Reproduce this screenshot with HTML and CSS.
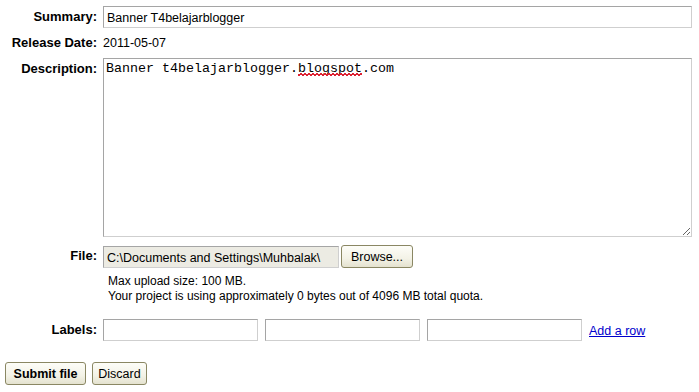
FILE: index.html
```html
<!DOCTYPE html>
<html>
<head>
<meta charset="utf-8">
<link rel="stylesheet" href="styles.css">
</head>
<body>
<form class="form">
  <div class="row">
    <label class="lbl">Summary:</label>
    <div class="field"><input class="text summary" type="text" value="Banner T4belajarblogger"></div>
  </div>
  <div class="row row-date">
    <label class="lbl">Release Date:</label>
    <div class="field value">2011-05-07</div>
  </div>
  <div class="row row-desc">
    <label class="lbl">Description:</label>
    <div class="field"><textarea class="desc" spellcheck="false">Banner t4belajarblogger.blogspot.com</textarea><span class="squiggle"></span></div>
  </div>
  <div class="row row-file">
    <label class="lbl">File:</label>
    <div class="field file-field">
      <div class="file-box">C:\Documents and Settings\Muhbalak\</div>
      <button type="button" class="btn browse">Browse...</button>
    </div>
  </div>
  <div class="row row-help">
    <div></div>
    <div class="help">Max upload size: 100 MB.<br>Your project is using approximately 0 bytes out of 4096 MB total quota.</div>
  </div>
  <div class="row row-labels">
    <label class="lbl">Labels:</label>
    <div class="field labels">
      <input class="text lab" type="text">
      <input class="text lab" type="text">
      <input class="text lab" type="text">
      <a class="add" href="#">Add a row</a>
    </div>
  </div>
  <div class="actions">
    <button type="button" class="btn submit">Submit file</button>
    <button type="button" class="btn discard">Discard</button>
  </div>
</form>
</body>
</html>
```

FILE: styles.css
```css
html, body {
  margin: 0;
  padding: 0;
  background: #fff;
}
body {
  font-family: "Liberation Sans", Arial, sans-serif;
  font-size: 12.5px;
  color: #000;
}
.form {
  padding: 6px 0 0 5px;
  width: 687px;
}
.row {
  display: grid;
  grid-template-columns: 92px 1fr;
  column-gap: 6px;
  align-items: start;
}
.lbl {
  text-align: right;
  font-weight: bold;
  font-size: 13px;
  line-height: 16px;
  padding-top: 3px;
  white-space: nowrap;
}
.row-date {
  margin-top: 7px;
}
.row-date .lbl {
  padding-top: 0;
}
.value {
  line-height: 16px;
  font-size: 12.5px;
}
.row-desc {
  margin-top: 7px;
}
.row-file {
  margin-top: 8px;
}
.row-help {
  margin-top: 6px;
}
.row-labels {
  margin-top: 15px;
}
.field {
  position: relative;
}
.text {
  box-sizing: border-box;
  height: 22px;
  margin: 0;
  padding: 1px 3px 0;
  border: 1px solid;
  border-color: #a5a5a5 #cfcfcf #cfcfcf #a5a5a5;
  font-family: "Liberation Sans", Arial, sans-serif;
  font-size: 12.5px;
  color: #000;
  background: #fff;
  outline: none;
}
.summary {
  width: 589px;
  display: block;
}
.desc {
  display: block;
  box-sizing: border-box;
  width: 589px;
  height: 179px;
  margin: 0;
  padding: 2px 2px;
  border: 1px solid;
  border-color: #a5a5a5 #cfcfcf #cfcfcf #a5a5a5;
  font-family: "Liberation Mono", "Courier New", monospace;
  font-size: 13.33px;
  line-height: 16px;
  color: #000;
  resize: both;
  outline: none;
}
.squiggle {
  position: absolute;
  left: 195px;
  top: 15px;
  width: 64px;
  height: 3px;
  background-image: linear-gradient(135deg, transparent 35%, #d23 35%, #d23 60%, transparent 60%), linear-gradient(45deg, transparent 35%, #d23 35%, #d23 60%, transparent 60%);
  background-size: 4px 3px;
  background-position: 0 0, 2px 0;
  background-repeat: repeat-x;
}
.file-field {
  display: flex;
  align-items: center;
  gap: 2px;
}
.file-box {
  box-sizing: border-box;
  width: 236px;
  height: 22px;
  border: 1px solid;
  border-color: #a5a5a5 #cfcfcf #cfcfcf #a5a5a5;
  background: #ecebe3;
  padding: 3px 2px 0 3px;
  white-space: nowrap;
  overflow: hidden;
  font-size: 12.5px;
  line-height: 16px;
}
.btn {
  box-sizing: border-box;
  height: 23px;
  margin: 0;
  padding: 0 5px;
  border: 1px solid #8a8763;
  border-radius: 3px;
  background: linear-gradient(#fdfdf8, #f3f2e6 60%, #e4e2cf);
  font-family: "Liberation Sans", Arial, sans-serif;
  font-size: 12.5px;
  color: #000;
  cursor: default;
}
.browse {
  width: 72px;
}
.help {
  padding-left: 5px;
  line-height: 15px;
  font-size: 12px;
}
.labels {
  display: flex;
  align-items: center;
  gap: 7px;
}
.lab {
  width: 155px;
}
.add {
  color: #0000cc;
  text-decoration: underline;
  font-size: 12.5px;
  margin-top: 2px;
}
.actions {
  margin-top: 21px;
  display: flex;
  gap: 6px;
}
.submit {
  font-weight: bold;
  width: 81px;
  padding: 0 3px;
}
.discard {
  width: 55px;
  padding: 0 3px;
}
```
